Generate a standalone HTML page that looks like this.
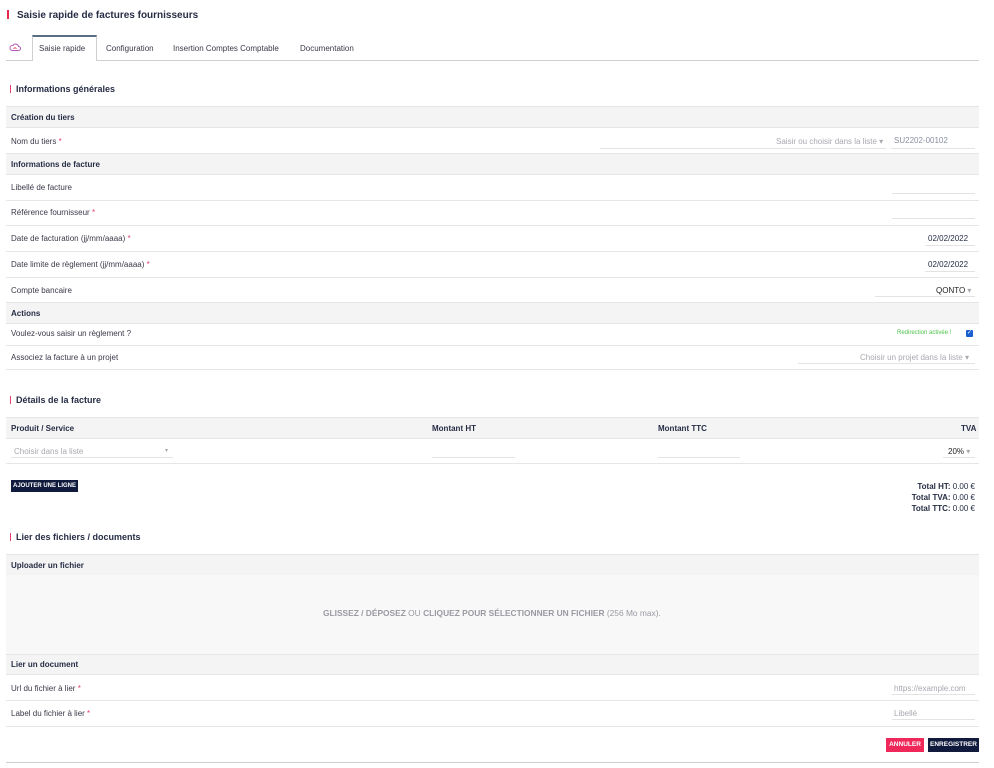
<!DOCTYPE html>
<html><head><meta charset="utf-8"><style>
*{margin:0;padding:0;box-sizing:border-box}
body{width:994px;height:768px;background:#fff;font-family:"Liberation Sans",sans-serif;font-size:8px;color:#3a3a4a;position:relative;overflow:hidden}
.a{position:absolute;white-space:nowrap}
.gh{position:absolute;left:6px;width:973px;background:#f4f4f4;border-top:1px solid #e6e6e6;border-bottom:1px solid #e6e6e6}
.gh span{position:absolute;left:5px;font-weight:bold;color:#262d45;font-size:8px}
.ln{position:absolute;left:6px;width:973px;height:1px;background:#e6e6e6}
.st{position:absolute;font-weight:bold;font-size:9px;color:#262d45}
.st:before{content:"";position:absolute;left:-6px;top:1px;width:1px;height:8px;background:#e83e6a}
.req{color:#e83e6a}
.u{position:absolute;height:1px;background:#e3e3e3}
.n{color:#262d45}
.g{color:#a8a8b0}
</style></head><body>
<div class="a" style="left:7px;top:10px;width:2px;height:9px;background:#e8264f"></div>
<div class="a" style="left:17px;top:10px;font-weight:bold;font-size:10px;color:#262d45">Saisie rapide de factures fournisseurs</div>

<div class="a" style="left:6px;top:60px;width:973px;height:1px;background:#cfcfcf"></div>
<div class="a" style="left:32px;top:35px;width:65px;height:26px;border:1px solid #cfcfcf;border-top:2px solid #5a6e83;border-bottom:none;background:#fff"></div>
<svg class="a" style="left:9px;top:43px" width="12" height="8" viewBox="0 0 12 8"><path d="M3 7.5h6.5a2 2 0 0 0 0-4 3 3 0 0 0-5.5-1A2.3 2.3 0 0 0 3 7.5z" fill="none" stroke="#b35ab8" stroke-width="1"/><path d="M4.5 6 6 4.5 7.5 6" fill="none" stroke="#e83e6a" stroke-width=".8"/></svg>
<div class="a" style="left:39px;top:44px">Saisie rapide</div>
<div class="a" style="left:106px;top:44px">Configuration</div>
<div class="a" style="left:173px;top:44px">Insertion Comptes Comptable</div>
<div class="a" style="left:300px;top:44px">Documentation</div>

<div class="st" style="left:16px;top:84px">Informations générales</div>
<div class="gh" style="top:106px;height:22px"><span style="top:6px">Création du tiers</span></div>
<div class="a" style="left:11px;top:137px">Nom du tiers <span class="req">*</span></div>
<div class="a g" style="left:776px;top:137px">Saisir ou choisir dans la liste ▾</div>
<div class="a g" style="left:894px;top:136px;color:#8a8fa0">SU2202-00102</div>
<div class="u" style="left:600px;top:148px;width:286px"></div>
<div class="u" style="left:891px;top:148px;width:84px"></div>
<div class="gh" style="top:153px;height:22px"><span style="top:6px">Informations de facture</span></div>
<div class="a" style="left:11px;top:183px">Libellé de facture</div>
<div class="u" style="left:892px;top:193px;width:83px"></div>
<div class="ln" style="top:200px"></div>
<div class="a" style="left:11px;top:208px">Référence fournisseur <span class="req">*</span></div>
<div class="u" style="left:892px;top:218px;width:83px"></div>
<div class="ln" style="top:225px"></div>
<div class="a" style="left:11px;top:234px">Date de facturation (jj/mm/aaaa) <span class="req">*</span></div>
<div class="a n" style="left:928px;top:234px">02/02/2022</div>
<div class="u" style="left:925px;top:245px;width:50px"></div>
<div class="ln" style="top:251px"></div>
<div class="a" style="left:11px;top:260px">Date limite de règlement (jj/mm/aaaa) <span class="req">*</span></div>
<div class="a n" style="left:928px;top:260px">02/02/2022</div>
<div class="u" style="left:925px;top:271px;width:50px"></div>
<div class="ln" style="top:277px"></div>
<div class="a" style="left:11px;top:286px">Compte bancaire</div>
<div class="a" style="left:936px;top:286px;color:#222">QONTO <span class="g">▾</span></div>
<div class="u" style="left:875px;top:296px;width:100px"></div>
<div class="gh" style="top:302px;height:22px"><span style="top:6px">Actions</span></div>
<div class="a" style="left:11px;top:329px">Voulez-vous saisir un règlement ?</div>
<div class="a" style="left:897px;top:330px;font-size:6px;color:#4cc44c">Redirection activée !</div>
<div class="a" style="left:966px;top:330px;width:7px;height:7px;background:#1a5fd0;border-radius:1px;color:#fff;font-size:6px;line-height:7px;text-align:center">✓</div>
<div class="ln" style="top:345px"></div>
<div class="a" style="left:11px;top:353px">Associez la facture à un projet</div>
<div class="a g" style="left:860px;top:353px">Choisir un projet dans la liste ▾</div>
<div class="u" style="left:798px;top:363px;width:177px"></div>
<div class="ln" style="top:369px"></div>

<div class="st" style="left:16px;top:395px">Détails de la facture</div>
<div class="gh" style="top:417px;height:22px"><span style="top:6px">Produit / Service</span></div>
<div class="a n" style="left:432px;top:424px;font-weight:bold">Montant HT</div>
<div class="a n" style="left:658px;top:424px;font-weight:bold">Montant TTC</div>
<div class="a n" style="left:961px;top:424px;font-weight:bold">TVA</div>
<div class="a g" style="left:14px;top:447px">Choisir dans la liste</div>
<div class="a g" style="left:165px;top:447px;font-size:6px">▾</div>
<div class="u" style="left:11px;top:457px;width:162px"></div>
<div class="u" style="left:432px;top:457px;width:83px"></div>
<div class="u" style="left:658px;top:457px;width:82px"></div>
<div class="a" style="left:948px;top:447px;color:#222">20% <span class="g">▾</span></div>
<div class="u" style="left:943px;top:457px;width:32px"></div>
<div class="ln" style="top:463px"></div>
<div class="a" style="left:11px;top:480px;width:67px;height:12px;background:#0f1a3c;color:#fff;font-size:6px;font-weight:bold;line-height:12px;text-align:center">AJOUTER UNE LIGNE</div>
<div class="a n" style="right:19px;top:481px;text-align:right;line-height:11px"><b>Total HT:</b> 0.00 €<br><b>Total TVA:</b> 0.00 €<br><b>Total TTC:</b> 0.00 €</div>

<div class="st" style="left:16px;top:532px">Lier des fichiers / documents</div>
<div class="gh" style="top:554px;height:22px"><span style="top:6px">Uploader un fichier</span></div>
<div class="a" style="left:6px;top:575px;width:973px;height:79px;background:#f8f8f8"></div>
<div class="a" style="left:323px;top:608px;color:#9a9aa3;font-size:8.4px"><b>GLISSEZ / DÉPOSEZ</b> OU <b>CLIQUEZ POUR SÉLECTIONNER UN FICHIER</b> (256 Mo max).</div>
<div class="gh" style="top:654px;height:21px"><span style="top:5px">Lier un document</span></div>
<div class="a" style="left:11px;top:684px">Url du fichier à lier <span class="req">*</span></div>
<div class="a g" style="left:894px;top:684px">https://example.com</div>
<div class="u" style="left:892px;top:694px;width:83px"></div>
<div class="ln" style="top:700px"></div>
<div class="a" style="left:11px;top:709px">Label du fichier à lier <span class="req">*</span></div>
<div class="a g" style="left:894px;top:709px">Libellé</div>
<div class="u" style="left:892px;top:719px;width:83px"></div>
<div class="ln" style="top:726px"></div>
<div class="a" style="left:886px;top:738px;width:38px;height:14px;background:#f0285a;color:#fff;font-size:6.5px;font-weight:bold;line-height:14px;text-align:center">ANNULER</div>
<div class="a" style="left:928px;top:738px;width:51px;height:14px;background:#0f1a3c;color:#fff;font-size:6.5px;font-weight:bold;line-height:14px;text-align:center">ENREGISTRER</div>
<div class="a" style="left:6px;top:762px;width:973px;height:1px;background:#cfcfcf"></div>
</body></html>
